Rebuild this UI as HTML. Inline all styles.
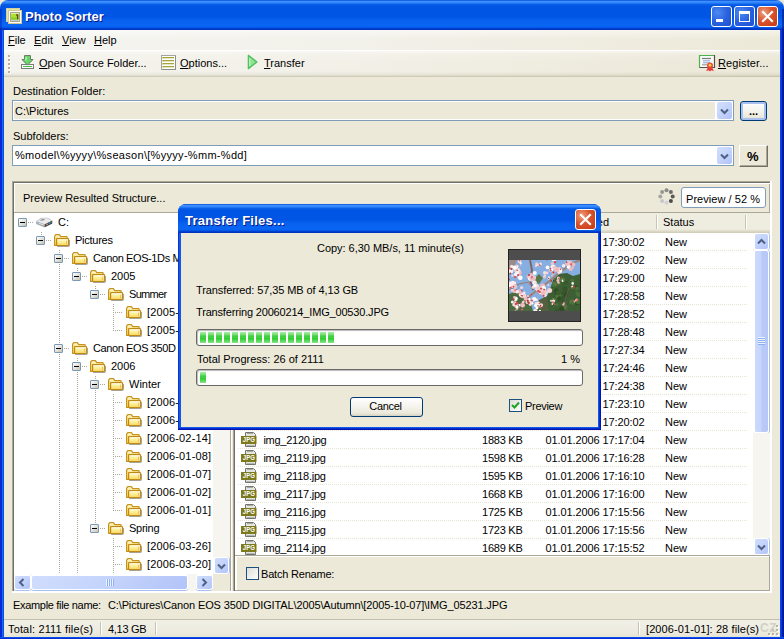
<!DOCTYPE html><html><head><meta charset="utf-8"><title>Photo Sorter</title><style>
*{box-sizing:border-box}
html,body{margin:0;padding:0}
body{width:784px;height:639px;position:relative;overflow:hidden;background:#ece9d8;font:11px "Liberation Sans",sans-serif;color:#000}
.a{position:absolute}
.t{position:absolute;white-space:nowrap;line-height:14px;height:14px}
u{text-decoration:underline}
.titlebar{left:0;top:0;width:784px;height:30px;border-radius:8px 8px 0 0;
 background:linear-gradient(180deg,#0848d8 0,#3c93ff 1.5px,#2a80f8 3px,#0a5fe8 4.5px,#0055e5 6px,#0055e5 17px,#0860ee 20px,#0a66f4 26px,#0658e8 27.5px,#0040d0 28.5px,#002fb8 30px)}
.bl{left:0;top:30px;width:4px;height:609px;background:linear-gradient(90deg,#0a2ad8 0,#0a2ad8 2px,#166aee 2px,#166aee 3px,#0652e2 3px)}
.br{left:780px;top:30px;width:4px;height:609px;background:linear-gradient(90deg,#0c48e8 0,#0c48e8 1px,#0838dc 1px,#0838dc 2px,#001ea8 2px,#001ea8 3px,#00189a 3px)}
.bb{left:0;top:637px;width:784px;height:2px;background:linear-gradient(180deg,#0a4ce8 0,#0a4ce8 1px,#0030d8 1px)}
.wtitle{font:bold 13px "Liberation Sans",sans-serif;color:#fff;text-shadow:1px 1px 0 #0a1883;line-height:16px;height:16px}
.cb{width:21px;height:21px;border:1px solid #fff;border-radius:3px;background:radial-gradient(circle at 30% 30%,#4d8bf0 0,#2a62e0 50%,#1f4fd0 100%)}
.cbx{background:radial-gradient(circle at 30% 30%,#f0a080 0,#d9532c 45%,#c23a14 100%)}
.menubar{left:4px;top:30px;width:776px;height:20px;background:linear-gradient(180deg,rgba(255,255,255,.5) 0,rgba(255,255,255,0) 9px),linear-gradient(90deg,#f5f5f1 0,#f2f1ea 45%,#efecdf 80%,#ece9d8 100%)}
.toolbar{left:4px;top:50px;width:776px;height:27px;background:linear-gradient(180deg,rgba(255,255,255,.55) 0,rgba(255,255,255,.15) 3px,rgba(255,255,255,0) 10px,rgba(100,90,40,0) 20px,rgba(100,90,40,.05) 23px,rgba(100,90,40,.13) 24.5px,rgba(100,90,40,.24) 25.5px,rgba(100,90,40,.06) 26px),linear-gradient(90deg,#f4f3ed 0,#f2f0e7 45%,#eeebdd 80%,#ebe8d8 100%);border-top:1px solid #fff}
.combo{border:1px solid #7f9db9;background:#fff;height:21px}
.cbtn{width:15px;height:17px;border-radius:2px;background:linear-gradient(135deg,#d2dffd 0,#c2d2fb 55%,#b0c1f8 100%)}
.btn{border:1px solid #003c74;border-radius:3px;background:linear-gradient(180deg,#fff 0,#f4f3ec 50%,#ebe8da 85%,#d6d0c0 100%);text-align:center}
.sunk{border:1px solid;border-color:#808080 #fff #fff #808080}
.hdr{background:#ece9d8}
.pb{border:1px solid #686868;border-radius:3px;background:#fff;box-shadow:inset 1px 1px 1px #bbb}
.blk{position:absolute;top:3px;width:6px;height:11px;background:linear-gradient(180deg,#a4eca4 0,#86e486 2px,#44d244 4px,#36cd36 7px,#5cd85c 9px,#8ee68e 11px)}
.row{position:absolute;left:0;height:18px;width:100%}
.ex{position:absolute;width:9px;height:9px;border:1px solid #7898b5;border-radius:1px;background:linear-gradient(135deg,#fff,#c8c4b4)}
.ex:after{content:"";position:absolute;left:1px;top:3px;width:5px;height:1px;background:#000}
.sbtn{width:17px;height:17px;border:1px solid #fff;border-radius:3px;background:linear-gradient(135deg,#d0ddfd 0,#c2d2fb 55%,#b2c3f8 100%)}
.sh{height:16px;border-top-width:2px;box-shadow:0 1px 0 #a9bff1}
.sv{width:16px;border-left-width:2px;box-shadow:1px 0 0 #a9bff1}
.lst{font:11px "Liberation Sans",sans-serif}
</style></head><body><svg width="0" height="0" style="position:absolute"><defs><linearGradient id="fg" x1="0" y1="0" x2="0" y2="1"><stop offset="0" stop-color="#fff8c4"/><stop offset="0.55" stop-color="#fdec8c"/><stop offset="1" stop-color="#f7d460"/></linearGradient><linearGradient id="fb" x1="0" y1="0" x2="0" y2="1"><stop offset="0" stop-color="#fffbe6"/><stop offset="0.35" stop-color="#fbe88c"/><stop offset="1" stop-color="#f6d869"/></linearGradient></defs></svg>
<div class="a" style="left:0;top:0;width:784px;height:12px;background:#ece9d8"></div>
<div class="a titlebar"></div>
<div class="a bl"></div><div class="a br"></div><div class="a bb"></div>
<div class="a" style="left:782px;top:9px;width:2px;height:21px;background:rgba(0,10,110,.5)"></div><div class="a" style="left:0;top:9px;width:2px;height:21px;background:rgba(0,20,160,.35)"></div>
<svg class="a" style="left:6px;top:8px" width="16" height="16" viewBox="0 0 16 16"><rect x="0.5" y="0.5" width="13" height="13" fill="#fffef8" stroke="#dccba0"/><rect x="1.6" y="1.6" width="11.4" height="11.4" fill="#8ed818"/><rect x="2.5" y="2.5" width="13" height="13" fill="#fffffb" stroke="#d6c49a"/><rect x="4.5" y="4.5" width="9" height="9" fill="#f4f4f0" stroke="#aaa492"/><rect x="5" y="5.6" width="8" height="6" fill="#aee230"/><rect x="5" y="9.6" width="8" height="2" fill="#84c82c"/><path d="M10.4 6 Q12.6 5.6 12.4 7.8 L12 11.2 H11 L11 8.6 Q9.8 7.8 10.4 6 Z" fill="#5c4a1c"/><rect x="5.5" y="12.2" width="7" height="0.9" fill="#b4b6c0"/></svg>
<div class="t wtitle" style="left:25px;top:9px">Photo Sorter</div>
<div class="a cb" style="left:711px;top:6px"></div><div class="a" style="left:716px;top:19px;width:7px;height:3px;background:#fff"></div>
<div class="a cb" style="left:734px;top:6px"></div><div class="a" style="left:739px;top:11px;width:11px;height:11px;border:1px solid #fff;border-top-width:3px"></div>
<div class="a cb cbx" style="left:757px;top:6px"></div><svg class="a" style="left:761px;top:10px" width="13" height="13" viewBox="0 0 13 13"><path d="M2 2 L11 11 M11 2 L2 11" stroke="#fff" stroke-width="2.2" stroke-linecap="square"/></svg>
<div class="a menubar"></div>
<div class="t" style="left:8px;top:33px"><u>F</u>ile</div>
<div class="t" style="left:34px;top:33px"><u>E</u>dit</div>
<div class="t" style="left:62px;top:33px"><u>V</u>iew</div>
<div class="t" style="left:94px;top:33px"><u>H</u>elp</div>
<div class="a toolbar"></div>
<div class="a" style="left:9px;top:56px;width:2px;height:2px;background:#fff"></div><div class="a" style="left:8px;top:55px;width:2px;height:2px;background:#b4b09c"></div>
<div class="a" style="left:9px;top:60px;width:2px;height:2px;background:#fff"></div><div class="a" style="left:8px;top:59px;width:2px;height:2px;background:#b4b09c"></div>
<div class="a" style="left:9px;top:64px;width:2px;height:2px;background:#fff"></div><div class="a" style="left:8px;top:63px;width:2px;height:2px;background:#b4b09c"></div>
<div class="a" style="left:9px;top:68px;width:2px;height:2px;background:#fff"></div><div class="a" style="left:8px;top:67px;width:2px;height:2px;background:#b4b09c"></div>
<div class="a" style="left:9px;top:72px;width:2px;height:2px;background:#fff"></div><div class="a" style="left:8px;top:71px;width:2px;height:2px;background:#b4b09c"></div>
<svg class="a" style="left:21px;top:55px" width="13" height="14" viewBox="0 0 13 14"><rect x="0.5" y="9.5" width="12" height="4" fill="#fcfcf8" stroke="#7c7c7c"/><path d="M3.5 0.5 H9.5 V4.5 H12 L6.5 10.2 L1 4.5 H3.5 Z" fill="#66d766" stroke="#6c7c6c" stroke-width="1" stroke-linejoin="round"/><path d="M5 2 V5.5" stroke="#b4f0b4" stroke-width="1.5"/><path d="M2 11.5 H11" stroke="#48c048" stroke-width="1"/></svg>
<div class="t" style="left:39px;top:56px"><u>O</u>pen Source Folder...</div>
<svg class="a" style="left:161px;top:55px" width="15" height="15" viewBox="0 0 15 15"><rect x="0.5" y="0.5" width="14" height="14" fill="#fdfdfa" stroke="#a4a4a0"/><path d="M14.5 1 V14.5 H1" stroke="#8c8c88" fill="none"/><path d="M2 3.5 V2.6 H13 M2 6.5 V5.6 H13 M2 9.5 V8.6 H13 M2 12.5 V11.6 H13" stroke="#a4a43c" stroke-width="1.2" fill="none"/></svg>
<div class="t" style="left:180px;top:56px"><u>O</u>ptions...</div>
<svg class="a" style="left:247px;top:54px" width="11" height="16" viewBox="0 0 11 16"><path d="M1.4 1.4 L9.9 8 L1.4 14.6 Z" fill="#8fe28f" stroke="#4fc262" stroke-width="1.4" stroke-linejoin="round"/><path d="M2.8 4 V12" stroke="#c4f2c4" stroke-width="1.2"/></svg>
<div class="t" style="left:264px;top:56px"><u>T</u>ransfer</div>
<svg class="a" style="left:698px;top:54px" width="18" height="18" viewBox="0 0 18 18"><rect x="1.5" y="1.5" width="15" height="12" fill="#f8faf8"/><path d="M1.5 13.5 V1.5 H16" stroke="#4fb24f" stroke-width="1.2" fill="none"/><path d="M16.5 1 V13.5 H1.5" stroke="#505050" stroke-width="1.2" fill="none"/><path d="M4 4.5 H13" stroke="#7c7c7c" stroke-width="1.2"/><path d="M5 6.8 H12 M5 8.8 H12" stroke="#8aa4d8" stroke-width="1"/><path d="M4 10.8 H9" stroke="#8c8c8c" stroke-width="1"/><path d="M10 13 L8.2 17.2 L10.6 16.2 L12 17.6 L13.4 16.2 L15.8 17.2 L14 13 Z" fill="#e83838"/><circle cx="12" cy="11.4" r="3" fill="#ec4a30"/><circle cx="12" cy="11.2" r="1.4" fill="#f8d048"/></svg>
<div class="t" style="left:718px;top:56px;letter-spacing:0.1px"><u>R</u>egister...</div>
<div class="t" style="left:13px;top:84px">Destination Folder:</div>
<div class="a combo" style="left:12px;top:100px;width:722px"></div><div class="a" style="left:14px;top:102px;width:701px;height:17px;background:#ece9d8"></div>
<div class="t" style="left:15px;top:104px">C:\Pictures</div>
<div class="a cbtn" style="left:717px;top:102px"></div><svg class="a" style="left:720px;top:108px" width="9" height="7" viewBox="0 0 9 7"><path d="M1 1.5 L4.5 5 L8 1.5" fill="none" stroke="#4d6185" stroke-width="2"/></svg>
<div class="a btn" style="left:740px;top:101px;width:27px;height:20px;box-shadow:inset 0 0 0 2px #a8c0f0"></div><div class="t" style="left:749px;top:104px;font-weight:bold">...</div>
<div class="t" style="left:13px;top:129px">Subfolders:</div>
<div class="a combo" style="left:12px;top:145px;width:722px"></div>
<div class="t" style="left:15px;top:148px;letter-spacing:0.3px">%model\%yyyy\%season\[%yyyy-%mm-%dd]</div>
<div class="a cbtn" style="left:717px;top:147px"></div><svg class="a" style="left:720px;top:153px" width="9" height="7" viewBox="0 0 9 7"><path d="M1 1.5 L4.5 5 L8 1.5" fill="none" stroke="#4d6185" stroke-width="2"/></svg>
<div class="a" style="left:739px;top:145px;width:29px;height:22px;border:1px solid;border-color:#fff #716f64 #716f64 #fff;background:#ece9d8;box-shadow:inset -1px -1px 0 #aca899"></div><div class="t" style="left:747px;top:150px;font-weight:bold;font-size:13px">%</div>
<div class="a" style="left:12px;top:181px;width:760px;height:1px;background:#aca899"></div><div class="a" style="left:12px;top:181px;width:1px;height:412px;background:#aca899"></div><div class="a" style="left:13px;top:182px;width:758px;height:1px;background:#716f64"></div><div class="a" style="left:13px;top:182px;width:1px;height:410px;background:#716f64"></div>
<div class="a" style="left:770px;top:181px;width:2px;height:412px;background:#fff"></div><div class="a" style="left:12px;top:591px;width:760px;height:2px;background:#fff"></div>
<div class="a" style="left:14px;top:183px;width:756px;height:1px;background:#fff"></div><div class="a" style="left:14px;top:183px;width:1px;height:29px;background:#fff"></div><div class="a" style="left:769px;top:184px;width:1px;height:29px;background:#aca899"></div><div class="a" style="left:14px;top:212px;width:756px;height:1px;background:#aca899"></div>
<div class="t" style="left:23px;top:191px">Preview Resulted Structure...</div>
<svg class="a" style="left:658px;top:188px" width="17" height="17" viewBox="0 0 17 17"><circle cx="8.5" cy="2.3" r="2" fill="#8a8a86"/><circle cx="12.9" cy="4.1" r="2" fill="#6a6a6a"/><circle cx="14.7" cy="8.5" r="2" fill="#5a5a5a"/><circle cx="12.9" cy="12.9" r="2" fill="#4a4a4a"/><circle cx="8.5" cy="14.7" r="2" fill="#cfcfd6"/><circle cx="4.1" cy="12.9" r="2" fill="#c6c6cf"/><circle cx="2.3" cy="8.5" r="2" fill="#a6a6a0"/><circle cx="4.1" cy="4.1" r="2" fill="#98988f"/></svg>
<div class="a btn" style="left:681px;top:187px;width:85px;height:21px;background:#fff;border-color:#7f9db9"></div><div class="t" style="left:686px;top:192px;letter-spacing:0.05px">Preview / 52 %</div>
<div class="a" style="left:14px;top:213px;width:216px;height:361px;background:#fff;overflow:hidden">
<div class="a" style="left:27px;top:19px;width:1px;height:4px;background:repeating-linear-gradient(180deg,#aca898 0,#aca898 1px,transparent 1px,transparent 2px)"></div>
<div class="a" style="left:45px;top:37px;width:1px;height:4px;background:repeating-linear-gradient(180deg,#aca898 0,#aca898 1px,transparent 1px,transparent 2px)"></div>
<div class="a" style="left:45px;top:51px;width:1px;height:80px;background:repeating-linear-gradient(180deg,#aca898 0,#aca898 1px,transparent 1px,transparent 2px)"></div>
<div class="a" style="left:45px;top:141px;width:1px;height:246px;background:repeating-linear-gradient(180deg,#aca898 0,#aca898 1px,transparent 1px,transparent 2px)"></div>
<div class="a" style="left:63px;top:55px;width:1px;height:4px;background:repeating-linear-gradient(180deg,#aca898 0,#aca898 1px,transparent 1px,transparent 2px)"></div>
<div class="a" style="left:81px;top:73px;width:1px;height:4px;background:repeating-linear-gradient(180deg,#aca898 0,#aca898 1px,transparent 1px,transparent 2px)"></div>
<div class="a" style="left:99px;top:91px;width:1px;height:27px;background:repeating-linear-gradient(180deg,#aca898 0,#aca898 1px,transparent 1px,transparent 2px)"></div>
<div class="a" style="left:63px;top:145px;width:1px;height:4px;background:repeating-linear-gradient(180deg,#aca898 0,#aca898 1px,transparent 1px,transparent 2px)"></div>
<div class="a" style="left:63px;top:159px;width:1px;height:228px;background:repeating-linear-gradient(180deg,#aca898 0,#aca898 1px,transparent 1px,transparent 2px)"></div>
<div class="a" style="left:81px;top:163px;width:1px;height:4px;background:repeating-linear-gradient(180deg,#aca898 0,#aca898 1px,transparent 1px,transparent 2px)"></div>
<div class="a" style="left:81px;top:177px;width:1px;height:134px;background:repeating-linear-gradient(180deg,#aca898 0,#aca898 1px,transparent 1px,transparent 2px)"></div>
<div class="a" style="left:99px;top:181px;width:1px;height:117px;background:repeating-linear-gradient(180deg,#aca898 0,#aca898 1px,transparent 1px,transparent 2px)"></div>
<div class="a" style="left:99px;top:325px;width:1px;height:62px;background:repeating-linear-gradient(180deg,#aca898 0,#aca898 1px,transparent 1px,transparent 2px)"></div>
<div class="a" style="left:14px;top:9px;width:5px;height:1px;background:repeating-linear-gradient(90deg,#aca898 0,#aca898 1px,transparent 1px,transparent 2px)"></div>
<div class="ex" style="left:4px;top:5px"></div>
<svg class="a" style="left:22px;top:1px" width="17" height="16" viewBox="0 0 17 16"><path d="M0.4 7.4 L5 4.2 L11.6 4 L16.2 6.8 L16.2 9.6 L8.6 13.2 L0.4 10 Z" fill="#9c9c9c"/><path d="M0.4 7.4 L5 4.2 L11.6 4 L16.2 6.8 L8.6 10.4 Z" fill="#ececec" stroke="#b4b4b4" stroke-width="0.5"/><path d="M3.4 6.6 L6 5 L9.4 5 L7 6.8 Z" fill="#9a9a9a"/><path d="M8.6 10.4 L16.2 6.8 L16.2 9.6 L8.6 13.2 Z" fill="#3c444c"/><path d="M0.4 7.4 L8.6 10.4 L8.6 13.2 L0.4 10 Z" fill="#b0b0b0"/><path d="M1.4 8.6 L7.6 10.9" stroke="#e8e8e8" stroke-width="0.9"/><circle cx="13.4" cy="9.2" r="0.9" fill="#4a7ac0"/><circle cx="11" cy="10.4" r="0.8" fill="#e0a070"/><circle cx="14.8" cy="8" r="0.8" fill="#58a040"/><circle cx="2" cy="9" r="0.8" fill="#6aa0e0"/></svg>
<div class="t" style="left:44px;top:2px">C:</div>
<div class="a" style="left:32px;top:27px;width:5px;height:1px;background:repeating-linear-gradient(90deg,#aca898 0,#aca898 1px,transparent 1px,transparent 2px)"></div>
<div class="ex" style="left:22px;top:23px"></div>
<svg class="a" style="left:40px;top:19px" width="17" height="16" viewBox="0 0 17 16"><path d="M0.6 13.4 V4.2 L1.8 2.6 H5.4 L6.8 4.6 H12.4 Q13.2 4.6 13.2 5.4 V7 H2.6 V13.4 Z" fill="url(#fb)" stroke="#c6931c" stroke-width="1.2" stroke-linejoin="round"/><rect x="2.6" y="6.6" width="12" height="7" rx="0.8" fill="url(#fg)" stroke="#bf8a16" stroke-width="1.2"/><path d="M3.6 7.9 H13.6" stroke="#fffdf0" stroke-width="1"/><path d="M12.6 8.6 V12.4" stroke="#f0b860" stroke-width="0.9"/><path d="M3.2 14.5 H15.2 M15.5 8 V14.2" stroke="#50505c" stroke-opacity="0.5" stroke-width="0.9" fill="none"/></svg>
<div class="t" style="left:61px;top:20px;letter-spacing:-0.25px">Pictures</div>
<div class="a" style="left:50px;top:45px;width:5px;height:1px;background:repeating-linear-gradient(90deg,#aca898 0,#aca898 1px,transparent 1px,transparent 2px)"></div>
<div class="ex" style="left:40px;top:41px"></div>
<svg class="a" style="left:58px;top:37px" width="17" height="16" viewBox="0 0 17 16"><path d="M0.6 13.4 V4.2 L1.8 2.6 H5.4 L6.8 4.6 H12.4 Q13.2 4.6 13.2 5.4 V7 H2.6 V13.4 Z" fill="url(#fb)" stroke="#c6931c" stroke-width="1.2" stroke-linejoin="round"/><rect x="2.6" y="6.6" width="12" height="7" rx="0.8" fill="url(#fg)" stroke="#bf8a16" stroke-width="1.2"/><path d="M3.6 7.9 H13.6" stroke="#fffdf0" stroke-width="1"/><path d="M12.6 8.6 V12.4" stroke="#f0b860" stroke-width="0.9"/><path d="M3.2 14.5 H15.2 M15.5 8 V14.2" stroke="#50505c" stroke-opacity="0.5" stroke-width="0.9" fill="none"/></svg>
<div class="t" style="left:79px;top:38px;letter-spacing:-0.4px">Canon EOS-1Ds Mark II</div>
<div class="a" style="left:68px;top:63px;width:5px;height:1px;background:repeating-linear-gradient(90deg,#aca898 0,#aca898 1px,transparent 1px,transparent 2px)"></div>
<div class="ex" style="left:58px;top:59px"></div>
<svg class="a" style="left:76px;top:55px" width="17" height="16" viewBox="0 0 17 16"><path d="M0.6 13.4 V4.2 L1.8 2.6 H5.4 L6.8 4.6 H12.4 Q13.2 4.6 13.2 5.4 V7 H2.6 V13.4 Z" fill="url(#fb)" stroke="#c6931c" stroke-width="1.2" stroke-linejoin="round"/><rect x="2.6" y="6.6" width="12" height="7" rx="0.8" fill="url(#fg)" stroke="#bf8a16" stroke-width="1.2"/><path d="M3.6 7.9 H13.6" stroke="#fffdf0" stroke-width="1"/><path d="M12.6 8.6 V12.4" stroke="#f0b860" stroke-width="0.9"/><path d="M3.2 14.5 H15.2 M15.5 8 V14.2" stroke="#50505c" stroke-opacity="0.5" stroke-width="0.9" fill="none"/></svg>
<div class="t" style="left:97px;top:56px">2005</div>
<div class="a" style="left:86px;top:81px;width:5px;height:1px;background:repeating-linear-gradient(90deg,#aca898 0,#aca898 1px,transparent 1px,transparent 2px)"></div>
<div class="ex" style="left:76px;top:77px"></div>
<svg class="a" style="left:94px;top:73px" width="17" height="16" viewBox="0 0 17 16"><path d="M0.6 13.4 V4.2 L1.8 2.6 H5.4 L6.8 4.6 H12.4 Q13.2 4.6 13.2 5.4 V7 H2.6 V13.4 Z" fill="url(#fb)" stroke="#c6931c" stroke-width="1.2" stroke-linejoin="round"/><rect x="2.6" y="6.6" width="12" height="7" rx="0.8" fill="url(#fg)" stroke="#bf8a16" stroke-width="1.2"/><path d="M3.6 7.9 H13.6" stroke="#fffdf0" stroke-width="1"/><path d="M12.6 8.6 V12.4" stroke="#f0b860" stroke-width="0.9"/><path d="M3.2 14.5 H15.2 M15.5 8 V14.2" stroke="#50505c" stroke-opacity="0.5" stroke-width="0.9" fill="none"/></svg>
<div class="t" style="left:115px;top:74px;letter-spacing:-0.7px">Summer</div>
<div class="a" style="left:101px;top:99px;width:8px;height:1px;background:repeating-linear-gradient(90deg,#aca898 0,#aca898 1px,transparent 1px,transparent 2px)"></div>
<svg class="a" style="left:112px;top:91px" width="17" height="16" viewBox="0 0 17 16"><path d="M0.6 13.4 V4.2 L1.8 2.6 H5.4 L6.8 4.6 H12.4 Q13.2 4.6 13.2 5.4 V7 H2.6 V13.4 Z" fill="url(#fb)" stroke="#c6931c" stroke-width="1.2" stroke-linejoin="round"/><rect x="2.6" y="6.6" width="12" height="7" rx="0.8" fill="url(#fg)" stroke="#bf8a16" stroke-width="1.2"/><path d="M3.6 7.9 H13.6" stroke="#fffdf0" stroke-width="1"/><path d="M12.6 8.6 V12.4" stroke="#f0b860" stroke-width="0.9"/><path d="M3.2 14.5 H15.2 M15.5 8 V14.2" stroke="#50505c" stroke-opacity="0.5" stroke-width="0.9" fill="none"/></svg>
<div class="t" style="left:133px;top:92px;letter-spacing:0.15px">[2005-</div>
<div class="a" style="left:101px;top:117px;width:8px;height:1px;background:repeating-linear-gradient(90deg,#aca898 0,#aca898 1px,transparent 1px,transparent 2px)"></div>
<svg class="a" style="left:112px;top:109px" width="17" height="16" viewBox="0 0 17 16"><path d="M0.6 13.4 V4.2 L1.8 2.6 H5.4 L6.8 4.6 H12.4 Q13.2 4.6 13.2 5.4 V7 H2.6 V13.4 Z" fill="url(#fb)" stroke="#c6931c" stroke-width="1.2" stroke-linejoin="round"/><rect x="2.6" y="6.6" width="12" height="7" rx="0.8" fill="url(#fg)" stroke="#bf8a16" stroke-width="1.2"/><path d="M3.6 7.9 H13.6" stroke="#fffdf0" stroke-width="1"/><path d="M12.6 8.6 V12.4" stroke="#f0b860" stroke-width="0.9"/><path d="M3.2 14.5 H15.2 M15.5 8 V14.2" stroke="#50505c" stroke-opacity="0.5" stroke-width="0.9" fill="none"/></svg>
<div class="t" style="left:133px;top:110px;letter-spacing:0.15px">[2005-</div>
<div class="a" style="left:50px;top:135px;width:5px;height:1px;background:repeating-linear-gradient(90deg,#aca898 0,#aca898 1px,transparent 1px,transparent 2px)"></div>
<div class="ex" style="left:40px;top:131px"></div>
<svg class="a" style="left:58px;top:127px" width="17" height="16" viewBox="0 0 17 16"><path d="M0.6 13.4 V4.2 L1.8 2.6 H5.4 L6.8 4.6 H12.4 Q13.2 4.6 13.2 5.4 V7 H2.6 V13.4 Z" fill="url(#fb)" stroke="#c6931c" stroke-width="1.2" stroke-linejoin="round"/><rect x="2.6" y="6.6" width="12" height="7" rx="0.8" fill="url(#fg)" stroke="#bf8a16" stroke-width="1.2"/><path d="M3.6 7.9 H13.6" stroke="#fffdf0" stroke-width="1"/><path d="M12.6 8.6 V12.4" stroke="#f0b860" stroke-width="0.9"/><path d="M3.2 14.5 H15.2 M15.5 8 V14.2" stroke="#50505c" stroke-opacity="0.5" stroke-width="0.9" fill="none"/></svg>
<div class="t" style="left:79px;top:128px;letter-spacing:-0.4px">Canon EOS 350D DIGITAL</div>
<div class="a" style="left:68px;top:153px;width:5px;height:1px;background:repeating-linear-gradient(90deg,#aca898 0,#aca898 1px,transparent 1px,transparent 2px)"></div>
<div class="ex" style="left:58px;top:149px"></div>
<svg class="a" style="left:76px;top:145px" width="17" height="16" viewBox="0 0 17 16"><path d="M0.6 13.4 V4.2 L1.8 2.6 H5.4 L6.8 4.6 H12.4 Q13.2 4.6 13.2 5.4 V7 H2.6 V13.4 Z" fill="url(#fb)" stroke="#c6931c" stroke-width="1.2" stroke-linejoin="round"/><rect x="2.6" y="6.6" width="12" height="7" rx="0.8" fill="url(#fg)" stroke="#bf8a16" stroke-width="1.2"/><path d="M3.6 7.9 H13.6" stroke="#fffdf0" stroke-width="1"/><path d="M12.6 8.6 V12.4" stroke="#f0b860" stroke-width="0.9"/><path d="M3.2 14.5 H15.2 M15.5 8 V14.2" stroke="#50505c" stroke-opacity="0.5" stroke-width="0.9" fill="none"/></svg>
<div class="t" style="left:97px;top:146px">2006</div>
<div class="a" style="left:86px;top:171px;width:5px;height:1px;background:repeating-linear-gradient(90deg,#aca898 0,#aca898 1px,transparent 1px,transparent 2px)"></div>
<div class="ex" style="left:76px;top:167px"></div>
<svg class="a" style="left:94px;top:163px" width="17" height="16" viewBox="0 0 17 16"><path d="M0.6 13.4 V4.2 L1.8 2.6 H5.4 L6.8 4.6 H12.4 Q13.2 4.6 13.2 5.4 V7 H2.6 V13.4 Z" fill="url(#fb)" stroke="#c6931c" stroke-width="1.2" stroke-linejoin="round"/><rect x="2.6" y="6.6" width="12" height="7" rx="0.8" fill="url(#fg)" stroke="#bf8a16" stroke-width="1.2"/><path d="M3.6 7.9 H13.6" stroke="#fffdf0" stroke-width="1"/><path d="M12.6 8.6 V12.4" stroke="#f0b860" stroke-width="0.9"/><path d="M3.2 14.5 H15.2 M15.5 8 V14.2" stroke="#50505c" stroke-opacity="0.5" stroke-width="0.9" fill="none"/></svg>
<div class="t" style="left:115px;top:164px">Winter</div>
<div class="a" style="left:101px;top:189px;width:8px;height:1px;background:repeating-linear-gradient(90deg,#aca898 0,#aca898 1px,transparent 1px,transparent 2px)"></div>
<svg class="a" style="left:112px;top:181px" width="17" height="16" viewBox="0 0 17 16"><path d="M0.6 13.4 V4.2 L1.8 2.6 H5.4 L6.8 4.6 H12.4 Q13.2 4.6 13.2 5.4 V7 H2.6 V13.4 Z" fill="url(#fb)" stroke="#c6931c" stroke-width="1.2" stroke-linejoin="round"/><rect x="2.6" y="6.6" width="12" height="7" rx="0.8" fill="url(#fg)" stroke="#bf8a16" stroke-width="1.2"/><path d="M3.6 7.9 H13.6" stroke="#fffdf0" stroke-width="1"/><path d="M12.6 8.6 V12.4" stroke="#f0b860" stroke-width="0.9"/><path d="M3.2 14.5 H15.2 M15.5 8 V14.2" stroke="#50505c" stroke-opacity="0.5" stroke-width="0.9" fill="none"/></svg>
<div class="t" style="left:133px;top:182px;letter-spacing:0.15px">[2006-</div>
<div class="a" style="left:101px;top:207px;width:8px;height:1px;background:repeating-linear-gradient(90deg,#aca898 0,#aca898 1px,transparent 1px,transparent 2px)"></div>
<svg class="a" style="left:112px;top:199px" width="17" height="16" viewBox="0 0 17 16"><path d="M0.6 13.4 V4.2 L1.8 2.6 H5.4 L6.8 4.6 H12.4 Q13.2 4.6 13.2 5.4 V7 H2.6 V13.4 Z" fill="url(#fb)" stroke="#c6931c" stroke-width="1.2" stroke-linejoin="round"/><rect x="2.6" y="6.6" width="12" height="7" rx="0.8" fill="url(#fg)" stroke="#bf8a16" stroke-width="1.2"/><path d="M3.6 7.9 H13.6" stroke="#fffdf0" stroke-width="1"/><path d="M12.6 8.6 V12.4" stroke="#f0b860" stroke-width="0.9"/><path d="M3.2 14.5 H15.2 M15.5 8 V14.2" stroke="#50505c" stroke-opacity="0.5" stroke-width="0.9" fill="none"/></svg>
<div class="t" style="left:133px;top:200px;letter-spacing:0.15px">[2006-</div>
<div class="a" style="left:101px;top:225px;width:8px;height:1px;background:repeating-linear-gradient(90deg,#aca898 0,#aca898 1px,transparent 1px,transparent 2px)"></div>
<svg class="a" style="left:112px;top:217px" width="17" height="16" viewBox="0 0 17 16"><path d="M0.6 13.4 V4.2 L1.8 2.6 H5.4 L6.8 4.6 H12.4 Q13.2 4.6 13.2 5.4 V7 H2.6 V13.4 Z" fill="url(#fb)" stroke="#c6931c" stroke-width="1.2" stroke-linejoin="round"/><rect x="2.6" y="6.6" width="12" height="7" rx="0.8" fill="url(#fg)" stroke="#bf8a16" stroke-width="1.2"/><path d="M3.6 7.9 H13.6" stroke="#fffdf0" stroke-width="1"/><path d="M12.6 8.6 V12.4" stroke="#f0b860" stroke-width="0.9"/><path d="M3.2 14.5 H15.2 M15.5 8 V14.2" stroke="#50505c" stroke-opacity="0.5" stroke-width="0.9" fill="none"/></svg>
<div class="t" style="left:133px;top:218px;letter-spacing:0.15px">[2006-02-14]</div>
<div class="a" style="left:101px;top:243px;width:8px;height:1px;background:repeating-linear-gradient(90deg,#aca898 0,#aca898 1px,transparent 1px,transparent 2px)"></div>
<svg class="a" style="left:112px;top:235px" width="17" height="16" viewBox="0 0 17 16"><path d="M0.6 13.4 V4.2 L1.8 2.6 H5.4 L6.8 4.6 H12.4 Q13.2 4.6 13.2 5.4 V7 H2.6 V13.4 Z" fill="url(#fb)" stroke="#c6931c" stroke-width="1.2" stroke-linejoin="round"/><rect x="2.6" y="6.6" width="12" height="7" rx="0.8" fill="url(#fg)" stroke="#bf8a16" stroke-width="1.2"/><path d="M3.6 7.9 H13.6" stroke="#fffdf0" stroke-width="1"/><path d="M12.6 8.6 V12.4" stroke="#f0b860" stroke-width="0.9"/><path d="M3.2 14.5 H15.2 M15.5 8 V14.2" stroke="#50505c" stroke-opacity="0.5" stroke-width="0.9" fill="none"/></svg>
<div class="t" style="left:133px;top:236px;letter-spacing:0.15px">[2006-01-08]</div>
<div class="a" style="left:101px;top:261px;width:8px;height:1px;background:repeating-linear-gradient(90deg,#aca898 0,#aca898 1px,transparent 1px,transparent 2px)"></div>
<svg class="a" style="left:112px;top:253px" width="17" height="16" viewBox="0 0 17 16"><path d="M0.6 13.4 V4.2 L1.8 2.6 H5.4 L6.8 4.6 H12.4 Q13.2 4.6 13.2 5.4 V7 H2.6 V13.4 Z" fill="url(#fb)" stroke="#c6931c" stroke-width="1.2" stroke-linejoin="round"/><rect x="2.6" y="6.6" width="12" height="7" rx="0.8" fill="url(#fg)" stroke="#bf8a16" stroke-width="1.2"/><path d="M3.6 7.9 H13.6" stroke="#fffdf0" stroke-width="1"/><path d="M12.6 8.6 V12.4" stroke="#f0b860" stroke-width="0.9"/><path d="M3.2 14.5 H15.2 M15.5 8 V14.2" stroke="#50505c" stroke-opacity="0.5" stroke-width="0.9" fill="none"/></svg>
<div class="t" style="left:133px;top:254px;letter-spacing:0.15px">[2006-01-07]</div>
<div class="a" style="left:101px;top:279px;width:8px;height:1px;background:repeating-linear-gradient(90deg,#aca898 0,#aca898 1px,transparent 1px,transparent 2px)"></div>
<svg class="a" style="left:112px;top:271px" width="17" height="16" viewBox="0 0 17 16"><path d="M0.6 13.4 V4.2 L1.8 2.6 H5.4 L6.8 4.6 H12.4 Q13.2 4.6 13.2 5.4 V7 H2.6 V13.4 Z" fill="url(#fb)" stroke="#c6931c" stroke-width="1.2" stroke-linejoin="round"/><rect x="2.6" y="6.6" width="12" height="7" rx="0.8" fill="url(#fg)" stroke="#bf8a16" stroke-width="1.2"/><path d="M3.6 7.9 H13.6" stroke="#fffdf0" stroke-width="1"/><path d="M12.6 8.6 V12.4" stroke="#f0b860" stroke-width="0.9"/><path d="M3.2 14.5 H15.2 M15.5 8 V14.2" stroke="#50505c" stroke-opacity="0.5" stroke-width="0.9" fill="none"/></svg>
<div class="t" style="left:133px;top:272px;letter-spacing:0.15px">[2006-01-02]</div>
<div class="a" style="left:101px;top:297px;width:8px;height:1px;background:repeating-linear-gradient(90deg,#aca898 0,#aca898 1px,transparent 1px,transparent 2px)"></div>
<svg class="a" style="left:112px;top:289px" width="17" height="16" viewBox="0 0 17 16"><path d="M0.6 13.4 V4.2 L1.8 2.6 H5.4 L6.8 4.6 H12.4 Q13.2 4.6 13.2 5.4 V7 H2.6 V13.4 Z" fill="url(#fb)" stroke="#c6931c" stroke-width="1.2" stroke-linejoin="round"/><rect x="2.6" y="6.6" width="12" height="7" rx="0.8" fill="url(#fg)" stroke="#bf8a16" stroke-width="1.2"/><path d="M3.6 7.9 H13.6" stroke="#fffdf0" stroke-width="1"/><path d="M12.6 8.6 V12.4" stroke="#f0b860" stroke-width="0.9"/><path d="M3.2 14.5 H15.2 M15.5 8 V14.2" stroke="#50505c" stroke-opacity="0.5" stroke-width="0.9" fill="none"/></svg>
<div class="t" style="left:133px;top:290px;letter-spacing:0.15px">[2006-01-01]</div>
<div class="a" style="left:86px;top:315px;width:5px;height:1px;background:repeating-linear-gradient(90deg,#aca898 0,#aca898 1px,transparent 1px,transparent 2px)"></div>
<div class="ex" style="left:76px;top:311px"></div>
<svg class="a" style="left:94px;top:307px" width="17" height="16" viewBox="0 0 17 16"><path d="M0.6 13.4 V4.2 L1.8 2.6 H5.4 L6.8 4.6 H12.4 Q13.2 4.6 13.2 5.4 V7 H2.6 V13.4 Z" fill="url(#fb)" stroke="#c6931c" stroke-width="1.2" stroke-linejoin="round"/><rect x="2.6" y="6.6" width="12" height="7" rx="0.8" fill="url(#fg)" stroke="#bf8a16" stroke-width="1.2"/><path d="M3.6 7.9 H13.6" stroke="#fffdf0" stroke-width="1"/><path d="M12.6 8.6 V12.4" stroke="#f0b860" stroke-width="0.9"/><path d="M3.2 14.5 H15.2 M15.5 8 V14.2" stroke="#50505c" stroke-opacity="0.5" stroke-width="0.9" fill="none"/></svg>
<div class="t" style="left:115px;top:308px;letter-spacing:-0.25px">Spring</div>
<div class="a" style="left:101px;top:333px;width:8px;height:1px;background:repeating-linear-gradient(90deg,#aca898 0,#aca898 1px,transparent 1px,transparent 2px)"></div>
<svg class="a" style="left:112px;top:325px" width="17" height="16" viewBox="0 0 17 16"><path d="M0.6 13.4 V4.2 L1.8 2.6 H5.4 L6.8 4.6 H12.4 Q13.2 4.6 13.2 5.4 V7 H2.6 V13.4 Z" fill="url(#fb)" stroke="#c6931c" stroke-width="1.2" stroke-linejoin="round"/><rect x="2.6" y="6.6" width="12" height="7" rx="0.8" fill="url(#fg)" stroke="#bf8a16" stroke-width="1.2"/><path d="M3.6 7.9 H13.6" stroke="#fffdf0" stroke-width="1"/><path d="M12.6 8.6 V12.4" stroke="#f0b860" stroke-width="0.9"/><path d="M3.2 14.5 H15.2 M15.5 8 V14.2" stroke="#50505c" stroke-opacity="0.5" stroke-width="0.9" fill="none"/></svg>
<div class="t" style="left:133px;top:326px;letter-spacing:0.15px">[2006-03-26]</div>
<div class="a" style="left:101px;top:351px;width:8px;height:1px;background:repeating-linear-gradient(90deg,#aca898 0,#aca898 1px,transparent 1px,transparent 2px)"></div>
<svg class="a" style="left:112px;top:343px" width="17" height="16" viewBox="0 0 17 16"><path d="M0.6 13.4 V4.2 L1.8 2.6 H5.4 L6.8 4.6 H12.4 Q13.2 4.6 13.2 5.4 V7 H2.6 V13.4 Z" fill="url(#fb)" stroke="#c6931c" stroke-width="1.2" stroke-linejoin="round"/><rect x="2.6" y="6.6" width="12" height="7" rx="0.8" fill="url(#fg)" stroke="#bf8a16" stroke-width="1.2"/><path d="M3.6 7.9 H13.6" stroke="#fffdf0" stroke-width="1"/><path d="M12.6 8.6 V12.4" stroke="#f0b860" stroke-width="0.9"/><path d="M3.2 14.5 H15.2 M15.5 8 V14.2" stroke="#50505c" stroke-opacity="0.5" stroke-width="0.9" fill="none"/></svg>
<div class="t" style="left:133px;top:344px;letter-spacing:0.15px">[2006-03-20]</div>
</div>
<div class="a" style="left:213px;top:213px;width:17px;height:361px;background:#f6f5f0"></div>
<div class="a sbtn sv" style="left:213px;top:557px"></div><svg class="a" style="left:217px;top:563px" width="9" height="7" viewBox="0 0 9 7"><path d="M1 1.5 L4.5 5 L8 1.5" fill="none" stroke="#4d6185" stroke-width="2"/></svg>
<div class="a" style="left:14px;top:574px;width:199px;height:17px;background:#f6f5f0"></div>
<div class="a sbtn sh" style="left:14px;top:574px"></div><svg class="a" style="left:18px;top:578px" width="7" height="9" viewBox="0 0 7 9"><path d="M5.5 1 L2 4.5 L5.5 8" fill="none" stroke="#4d6185" stroke-width="2"/></svg>
<div class="a sbtn sh" style="left:31px;top:574px;width:157px"></div>
<div class="a" style="left:106px;top:579px;width:8px;height:7px;background:repeating-linear-gradient(90deg,#eef4fe 0,#eef4fe 1px,#8cb0f8 1px,#8cb0f8 2px)"></div>
<div class="a sbtn sh" style="left:196px;top:574px"></div><svg class="a" style="left:201px;top:578px" width="7" height="9" viewBox="0 0 7 9"><path d="M1.5 1 L5 4.5 L1.5 8" fill="none" stroke="#4d6185" stroke-width="2"/></svg>
<div class="a" style="left:213px;top:574px;width:17px;height:17px;background:#ece9d8"></div>
<div class="a" style="left:230px;top:213px;width:1px;height:378px;background:#aca899"></div><div class="a" style="left:231px;top:213px;width:1px;height:378px;background:#fff"></div><div class="a" style="left:232px;top:213px;width:1px;height:378px;background:#ece9d8"></div><div class="a" style="left:233px;top:213px;width:1px;height:378px;background:#aca899"></div><div class="a" style="left:234px;top:213px;width:1px;height:378px;background:#716f64"></div>
<div class="a" style="left:235px;top:213px;width:535px;height:20px;background:linear-gradient(180deg,#efede0 0,#efede0 16px,#e8e5d6 17px,#dfdccb 18px,#d5d1bf 19px,#d0ccba 20px)"></div>
<div class="a" style="left:656px;top:215px;width:1px;height:14px;background:#c8c5b2"></div><div class="a" style="left:657px;top:215px;width:1px;height:14px;background:#fff"></div>
<div class="a" style="left:745px;top:215px;width:1px;height:14px;background:#c8c5b2"></div><div class="a" style="left:746px;top:215px;width:1px;height:14px;background:#fff"></div>
<div class="t lst" style="left:509px;width:100px;text-align:right;top:216px">Date Modified</div><div class="t lst" style="left:663px;top:216px">Status</div>
<div class="a" style="left:235px;top:233px;width:535px;height:322px;background:#fff"></div>
<div class="t lst" style="left:545.5px;top:236px;letter-spacing:-0.1px">01.01.2006 17:30:02</div>
<div class="t lst" style="left:665px;top:236px">New</div>
<div class="a" style="left:238px;top:250px;width:510px;height:1px;background:repeating-linear-gradient(90deg,#e8e4d2 0,#e8e4d2 1px,transparent 1px,transparent 2px)"></div>
<div class="t lst" style="left:545.5px;top:254px;letter-spacing:-0.1px">01.01.2006 17:29:02</div>
<div class="t lst" style="left:665px;top:254px">New</div>
<div class="a" style="left:238px;top:268px;width:510px;height:1px;background:repeating-linear-gradient(90deg,#e8e4d2 0,#e8e4d2 1px,transparent 1px,transparent 2px)"></div>
<div class="t lst" style="left:545.5px;top:272px;letter-spacing:-0.1px">01.01.2006 17:29:00</div>
<div class="t lst" style="left:665px;top:272px">New</div>
<div class="a" style="left:238px;top:286px;width:510px;height:1px;background:repeating-linear-gradient(90deg,#e8e4d2 0,#e8e4d2 1px,transparent 1px,transparent 2px)"></div>
<div class="t lst" style="left:545.5px;top:290px;letter-spacing:-0.1px">01.01.2006 17:28:58</div>
<div class="t lst" style="left:665px;top:290px">New</div>
<div class="a" style="left:238px;top:304px;width:510px;height:1px;background:repeating-linear-gradient(90deg,#e8e4d2 0,#e8e4d2 1px,transparent 1px,transparent 2px)"></div>
<div class="t lst" style="left:545.5px;top:308px;letter-spacing:-0.1px">01.01.2006 17:28:52</div>
<div class="t lst" style="left:665px;top:308px">New</div>
<div class="a" style="left:238px;top:322px;width:510px;height:1px;background:repeating-linear-gradient(90deg,#e8e4d2 0,#e8e4d2 1px,transparent 1px,transparent 2px)"></div>
<div class="t lst" style="left:545.5px;top:326px;letter-spacing:-0.1px">01.01.2006 17:28:48</div>
<div class="t lst" style="left:665px;top:326px">New</div>
<div class="a" style="left:238px;top:340px;width:510px;height:1px;background:repeating-linear-gradient(90deg,#e8e4d2 0,#e8e4d2 1px,transparent 1px,transparent 2px)"></div>
<div class="t lst" style="left:545.5px;top:344px;letter-spacing:-0.1px">01.01.2006 17:27:34</div>
<div class="t lst" style="left:665px;top:344px">New</div>
<div class="a" style="left:238px;top:358px;width:510px;height:1px;background:repeating-linear-gradient(90deg,#e8e4d2 0,#e8e4d2 1px,transparent 1px,transparent 2px)"></div>
<div class="t lst" style="left:545.5px;top:362px;letter-spacing:-0.1px">01.01.2006 17:24:46</div>
<div class="t lst" style="left:665px;top:362px">New</div>
<div class="a" style="left:238px;top:376px;width:510px;height:1px;background:repeating-linear-gradient(90deg,#e8e4d2 0,#e8e4d2 1px,transparent 1px,transparent 2px)"></div>
<div class="t lst" style="left:545.5px;top:380px;letter-spacing:-0.1px">01.01.2006 17:24:38</div>
<div class="t lst" style="left:665px;top:380px">New</div>
<div class="a" style="left:238px;top:394px;width:510px;height:1px;background:repeating-linear-gradient(90deg,#e8e4d2 0,#e8e4d2 1px,transparent 1px,transparent 2px)"></div>
<div class="t lst" style="left:545.5px;top:398px;letter-spacing:-0.1px">01.01.2006 17:23:10</div>
<div class="t lst" style="left:665px;top:398px">New</div>
<div class="a" style="left:238px;top:412px;width:510px;height:1px;background:repeating-linear-gradient(90deg,#e8e4d2 0,#e8e4d2 1px,transparent 1px,transparent 2px)"></div>
<div class="t lst" style="left:545.5px;top:416px;letter-spacing:-0.1px">01.01.2006 17:20:02</div>
<div class="t lst" style="left:665px;top:416px">New</div>
<div class="a" style="left:238px;top:430px;width:510px;height:1px;background:repeating-linear-gradient(90deg,#e8e4d2 0,#e8e4d2 1px,transparent 1px,transparent 2px)"></div>
<svg class="a" style="left:240px;top:432px" width="17" height="16" viewBox="0 0 17 16"><path d="M5.5 0.5 H13.5 L15.5 2.5 V14.5 H5.5 Z" fill="#e4e4e0" stroke="#74746f" stroke-width="1"/><path d="M7 1.5 H13" stroke="#a8a8a4"/><path d="M6.5 13.5 H14.5" stroke="#b4b4b0"/><rect x="1" y="4" width="15.5" height="8" fill="#7c7a1c"/><text x="8.8" y="10.4" font-family="Liberation Sans, sans-serif" font-size="6.4" font-weight="bold" fill="#fff" text-anchor="middle" textLength="12" lengthAdjust="spacingAndGlyphs">JPG</text></svg>
<div class="t lst" style="left:263.4px;top:434px;letter-spacing:-0.25px">img_2120.jpg</div>
<div class="t lst" style="left:462.5px;width:60px;text-align:right;top:434px;letter-spacing:-0.25px">1883 KB</div>
<div class="t lst" style="left:545.5px;top:434px;letter-spacing:-0.1px">01.01.2006 17:17:04</div>
<div class="t lst" style="left:665px;top:434px">New</div>
<div class="a" style="left:238px;top:448px;width:510px;height:1px;background:repeating-linear-gradient(90deg,#e8e4d2 0,#e8e4d2 1px,transparent 1px,transparent 2px)"></div>
<svg class="a" style="left:240px;top:450px" width="17" height="16" viewBox="0 0 17 16"><path d="M5.5 0.5 H13.5 L15.5 2.5 V14.5 H5.5 Z" fill="#e4e4e0" stroke="#74746f" stroke-width="1"/><path d="M7 1.5 H13" stroke="#a8a8a4"/><path d="M6.5 13.5 H14.5" stroke="#b4b4b0"/><rect x="1" y="4" width="15.5" height="8" fill="#7c7a1c"/><text x="8.8" y="10.4" font-family="Liberation Sans, sans-serif" font-size="6.4" font-weight="bold" fill="#fff" text-anchor="middle" textLength="12" lengthAdjust="spacingAndGlyphs">JPG</text></svg>
<div class="t lst" style="left:263.4px;top:452px;letter-spacing:-0.25px">img_2119.jpg</div>
<div class="t lst" style="left:462.5px;width:60px;text-align:right;top:452px;letter-spacing:-0.25px">1598 KB</div>
<div class="t lst" style="left:545.5px;top:452px;letter-spacing:-0.1px">01.01.2006 17:16:28</div>
<div class="t lst" style="left:665px;top:452px">New</div>
<div class="a" style="left:238px;top:466px;width:510px;height:1px;background:repeating-linear-gradient(90deg,#e8e4d2 0,#e8e4d2 1px,transparent 1px,transparent 2px)"></div>
<svg class="a" style="left:240px;top:468px" width="17" height="16" viewBox="0 0 17 16"><path d="M5.5 0.5 H13.5 L15.5 2.5 V14.5 H5.5 Z" fill="#e4e4e0" stroke="#74746f" stroke-width="1"/><path d="M7 1.5 H13" stroke="#a8a8a4"/><path d="M6.5 13.5 H14.5" stroke="#b4b4b0"/><rect x="1" y="4" width="15.5" height="8" fill="#7c7a1c"/><text x="8.8" y="10.4" font-family="Liberation Sans, sans-serif" font-size="6.4" font-weight="bold" fill="#fff" text-anchor="middle" textLength="12" lengthAdjust="spacingAndGlyphs">JPG</text></svg>
<div class="t lst" style="left:263.4px;top:470px;letter-spacing:-0.25px">img_2118.jpg</div>
<div class="t lst" style="left:462.5px;width:60px;text-align:right;top:470px;letter-spacing:-0.25px">1595 KB</div>
<div class="t lst" style="left:545.5px;top:470px;letter-spacing:-0.1px">01.01.2006 17:16:10</div>
<div class="t lst" style="left:665px;top:470px">New</div>
<div class="a" style="left:238px;top:484px;width:510px;height:1px;background:repeating-linear-gradient(90deg,#e8e4d2 0,#e8e4d2 1px,transparent 1px,transparent 2px)"></div>
<svg class="a" style="left:240px;top:486px" width="17" height="16" viewBox="0 0 17 16"><path d="M5.5 0.5 H13.5 L15.5 2.5 V14.5 H5.5 Z" fill="#e4e4e0" stroke="#74746f" stroke-width="1"/><path d="M7 1.5 H13" stroke="#a8a8a4"/><path d="M6.5 13.5 H14.5" stroke="#b4b4b0"/><rect x="1" y="4" width="15.5" height="8" fill="#7c7a1c"/><text x="8.8" y="10.4" font-family="Liberation Sans, sans-serif" font-size="6.4" font-weight="bold" fill="#fff" text-anchor="middle" textLength="12" lengthAdjust="spacingAndGlyphs">JPG</text></svg>
<div class="t lst" style="left:263.4px;top:488px;letter-spacing:-0.25px">img_2117.jpg</div>
<div class="t lst" style="left:462.5px;width:60px;text-align:right;top:488px;letter-spacing:-0.25px">1668 KB</div>
<div class="t lst" style="left:545.5px;top:488px;letter-spacing:-0.1px">01.01.2006 17:16:00</div>
<div class="t lst" style="left:665px;top:488px">New</div>
<div class="a" style="left:238px;top:502px;width:510px;height:1px;background:repeating-linear-gradient(90deg,#e8e4d2 0,#e8e4d2 1px,transparent 1px,transparent 2px)"></div>
<svg class="a" style="left:240px;top:504px" width="17" height="16" viewBox="0 0 17 16"><path d="M5.5 0.5 H13.5 L15.5 2.5 V14.5 H5.5 Z" fill="#e4e4e0" stroke="#74746f" stroke-width="1"/><path d="M7 1.5 H13" stroke="#a8a8a4"/><path d="M6.5 13.5 H14.5" stroke="#b4b4b0"/><rect x="1" y="4" width="15.5" height="8" fill="#7c7a1c"/><text x="8.8" y="10.4" font-family="Liberation Sans, sans-serif" font-size="6.4" font-weight="bold" fill="#fff" text-anchor="middle" textLength="12" lengthAdjust="spacingAndGlyphs">JPG</text></svg>
<div class="t lst" style="left:263.4px;top:506px;letter-spacing:-0.25px">img_2116.jpg</div>
<div class="t lst" style="left:462.5px;width:60px;text-align:right;top:506px;letter-spacing:-0.25px">1725 KB</div>
<div class="t lst" style="left:545.5px;top:506px;letter-spacing:-0.1px">01.01.2006 17:15:56</div>
<div class="t lst" style="left:665px;top:506px">New</div>
<div class="a" style="left:238px;top:520px;width:510px;height:1px;background:repeating-linear-gradient(90deg,#e8e4d2 0,#e8e4d2 1px,transparent 1px,transparent 2px)"></div>
<svg class="a" style="left:240px;top:522px" width="17" height="16" viewBox="0 0 17 16"><path d="M5.5 0.5 H13.5 L15.5 2.5 V14.5 H5.5 Z" fill="#e4e4e0" stroke="#74746f" stroke-width="1"/><path d="M7 1.5 H13" stroke="#a8a8a4"/><path d="M6.5 13.5 H14.5" stroke="#b4b4b0"/><rect x="1" y="4" width="15.5" height="8" fill="#7c7a1c"/><text x="8.8" y="10.4" font-family="Liberation Sans, sans-serif" font-size="6.4" font-weight="bold" fill="#fff" text-anchor="middle" textLength="12" lengthAdjust="spacingAndGlyphs">JPG</text></svg>
<div class="t lst" style="left:263.4px;top:524px;letter-spacing:-0.25px">img_2115.jpg</div>
<div class="t lst" style="left:462.5px;width:60px;text-align:right;top:524px;letter-spacing:-0.25px">1723 KB</div>
<div class="t lst" style="left:545.5px;top:524px;letter-spacing:-0.1px">01.01.2006 17:15:56</div>
<div class="t lst" style="left:665px;top:524px">New</div>
<div class="a" style="left:238px;top:538px;width:510px;height:1px;background:repeating-linear-gradient(90deg,#e8e4d2 0,#e8e4d2 1px,transparent 1px,transparent 2px)"></div>
<svg class="a" style="left:240px;top:540px" width="17" height="16" viewBox="0 0 17 16"><path d="M5.5 0.5 H13.5 L15.5 2.5 V14.5 H5.5 Z" fill="#e4e4e0" stroke="#74746f" stroke-width="1"/><path d="M7 1.5 H13" stroke="#a8a8a4"/><path d="M6.5 13.5 H14.5" stroke="#b4b4b0"/><rect x="1" y="4" width="15.5" height="8" fill="#7c7a1c"/><text x="8.8" y="10.4" font-family="Liberation Sans, sans-serif" font-size="6.4" font-weight="bold" fill="#fff" text-anchor="middle" textLength="12" lengthAdjust="spacingAndGlyphs">JPG</text></svg>
<div class="t lst" style="left:263.4px;top:542px;letter-spacing:-0.25px">img_2114.jpg</div>
<div class="t lst" style="left:462.5px;width:60px;text-align:right;top:542px;letter-spacing:-0.25px">1689 KB</div>
<div class="t lst" style="left:545.5px;top:542px;letter-spacing:-0.1px">01.01.2006 17:15:52</div>
<div class="t lst" style="left:665px;top:542px">New</div>
<div class="a" style="left:238px;top:556px;width:510px;height:1px;background:repeating-linear-gradient(90deg,#e8e4d2 0,#e8e4d2 1px,transparent 1px,transparent 2px)"></div>
<div class="a" style="left:753px;top:233px;width:17px;height:322px;background:#f6f5f0"></div>
<div class="a sbtn sv" style="left:753px;top:233px"></div><svg class="a" style="left:757px;top:238px" width="9" height="7" viewBox="0 0 9 7"><path d="M1 5.5 L4.5 2 L8 5.5" fill="none" stroke="#4d6185" stroke-width="2"/></svg>
<div class="a sbtn sv" style="left:753px;top:250px;height:183px;background:linear-gradient(90deg,#cad9fc 0,#c6d5fb 45%,#b9c9f7 55%,#b6c6f6 100%)"></div>
<div class="a" style="left:758px;top:337px;width:7px;height:8px;background:repeating-linear-gradient(180deg,#eef4fe 0,#eef4fe 1px,#8cb0f8 1px,#8cb0f8 2px)"></div>
<div class="a sbtn sv" style="left:753px;top:538px"></div><svg class="a" style="left:757px;top:544px" width="9" height="7" viewBox="0 0 9 7"><path d="M1 1.5 L4.5 5 L8 1.5" fill="none" stroke="#4d6185" stroke-width="2"/></svg>
<div class="a" style="left:235px;top:555px;width:535px;height:1px;background:#aca899"></div><div class="a" style="left:235px;top:556px;width:535px;height:1px;background:#fff"></div><div class="a" style="left:235px;top:557px;width:2px;height:33px;background:#fff"></div><div class="a" style="left:237px;top:557px;width:532px;height:33px;background:#ece9d8"></div><div class="a" style="left:769px;top:556px;width:1px;height:35px;background:#aca899"></div><div class="a" style="left:235px;top:590px;width:535px;height:1px;background:#aca899"></div>
<div class="a" style="left:246px;top:567px;width:13px;height:13px;border:1px solid #1c5180;background:linear-gradient(135deg,#dcdcd7,#fff)"></div>
<div class="t" style="left:261px;top:567px;letter-spacing:-0.2px">Batch Rename:</div>
<div class="t" style="left:13px;top:598px;letter-spacing:-0.32px">Example file name:</div><div class="t" style="left:108px;top:598px;letter-spacing:-0.13px">C:\Pictures\Canon EOS 350D DIGITAL\2005\Autumn\[2005-10-07]\IMG_05231.JPG</div>
<div class="a" style="left:4px;top:619px;width:776px;height:18px;background:linear-gradient(180deg,#f1f0e7 0,#edebdf 12px,#e6e3d2 18px);border-top:1px solid #c2bfac"></div>
<div class="t" style="left:8px;top:622px;letter-spacing:0.15px">Total: 2111 file(s)</div>
<div class="a" style="left:100px;top:622px;width:1px;height:13px;background:#c5c2b2"></div><div class="a" style="left:101px;top:622px;width:1px;height:13px;background:#fff"></div>
<div class="t" style="left:108px;top:622px;letter-spacing:-0.3px">4,13 GB</div>
<div class="a" style="left:155px;top:622px;width:1px;height:13px;background:#c5c2b2"></div><div class="a" style="left:156px;top:622px;width:1px;height:13px;background:#fff"></div>
<div class="a" style="left:638px;top:622px;width:1px;height:13px;background:#c5c2b2"></div><div class="a" style="left:639px;top:622px;width:1px;height:13px;background:#fff"></div>
<div class="t" style="left:646px;top:622px;letter-spacing:0.1px">[2006-01-01]: 28 file(s)</div>
<div class="a" style="left:777px;top:634px;width:2px;height:2px;background:#fff"></div><div class="a" style="left:776px;top:633px;width:2px;height:2px;background:#b8b4a2"></div>
<div class="a" style="left:773px;top:634px;width:2px;height:2px;background:#fff"></div><div class="a" style="left:772px;top:633px;width:2px;height:2px;background:#b8b4a2"></div>
<div class="a" style="left:769px;top:634px;width:2px;height:2px;background:#fff"></div><div class="a" style="left:768px;top:633px;width:2px;height:2px;background:#b8b4a2"></div>
<div class="a" style="left:777px;top:630px;width:2px;height:2px;background:#fff"></div><div class="a" style="left:776px;top:629px;width:2px;height:2px;background:#b8b4a2"></div>
<div class="a" style="left:773px;top:630px;width:2px;height:2px;background:#fff"></div><div class="a" style="left:772px;top:629px;width:2px;height:2px;background:#b8b4a2"></div>
<div class="a" style="left:777px;top:626px;width:2px;height:2px;background:#fff"></div><div class="a" style="left:776px;top:625px;width:2px;height:2px;background:#b8b4a2"></div>
<div class="t" style="left:760px;top:621px;font:bold 12px 'Liberation Sans',sans-serif;line-height:15px;height:15px;color:#d3d0c4;letter-spacing:0.5px">CZ</div>
<div class="a" style="left:178px;top:204px;width:423px;height:226px;border-radius:8px 8px 0 0;background:#1259ea"></div>
<div class="a" style="left:178px;top:233px;width:1px;height:197px;background:#0a34cc"></div><div class="a" style="left:599px;top:233px;width:1px;height:197px;background:#0a2ccc"></div><div class="a" style="left:600px;top:233px;width:1px;height:197px;background:#0014b4"></div><div class="a" style="left:178px;top:428px;width:423px;height:1px;background:#0a2ccc"></div><div class="a" style="left:178px;top:429px;width:423px;height:1px;background:#0014b4"></div>
<div class="a" style="left:178px;top:204px;width:423px;height:29px;border-radius:8px 8px 0 0;background:linear-gradient(180deg,#0848d8 0,#3c93ff 1.5px,#2a80f8 3px,#0a5fe8 4.5px,#0055e5 6px,#0055e5 16px,#0860ee 19px,#0a66f4 25px,#0658e8 26.5px,#0040d0 27.5px,#002fb8 29px)"></div>
<div class="a" style="left:181px;top:233px;width:417px;height:194px;background:#ece9d8"></div>
<div class="t wtitle" style="left:185px;top:213px;letter-spacing:0.25px">Transfer Files...</div>
<div class="a cb cbx" style="left:575px;top:209px"></div><svg class="a" style="left:579px;top:213px" width="13" height="13" viewBox="0 0 13 13"><path d="M2 2 L11 11 M11 2 L2 11" stroke="#fff" stroke-width="2.2" stroke-linecap="square"/></svg>
<div class="t" style="left:317px;top:241px;letter-spacing:-0.03px">Copy: 6,30 MB/s, 11 minute(s)</div>
<div class="t" style="left:196px;top:283px;letter-spacing:-0.1px">Transferred: 57,35 MB of 4,13 GB</div>
<div class="t" style="left:196px;top:305px;letter-spacing:-0.17px">Transferring 20060214_IMG_00530.JPG</div>
<div class="a" style="left:508px;top:249px;width:73px;height:73px;background:#4d4d4d;border:1px solid #222"></div>
<svg class="a" style="left:509px;top:260px" width="71" height="51" viewBox="0 0 71 51"><defs><filter id="bl" x="-5%" y="-5%" width="110%" height="110%"><feGaussianBlur stdDeviation="0.55"/></filter><clipPath id="tc"><rect width="71" height="51"/></clipPath></defs><g clip-path="url(#tc)"><rect width="71" height="51" fill="#86aee0"/><g filter="url(#bl)"><path d="M33 51 L36 40 L41 30 L44 20 L50 14 L58 13 L64 16 L71 14 L71 51 Z" fill="#3d5f34"/><path d="M0 34 L8 31 L14 37 L22 44 L24 51 L0 51 Z" fill="#4b6b3c"/><path d="M0 0 L8 0 L5 8 L0 12 Z" fill="#9a8a8a"/><path d="M26 51 L30 40 L38 36 L40 51 Z" fill="#52603c"/><path d="M24 20 L30 14 L34 18 L30 24 Z" fill="#5a7848"/><circle cx="48.7" cy="21.3" r="1.3" fill="#35572a"/><circle cx="55.7" cy="28.8" r="2.5" fill="#35572a"/><circle cx="45.1" cy="19.0" r="1.3" fill="#587c40"/><circle cx="41.0" cy="30.9" r="1.4" fill="#3c5e2e"/><circle cx="45.4" cy="38.0" r="2.0" fill="#35572a"/><circle cx="51.1" cy="50.2" r="2.0" fill="#35572a"/><circle cx="42.4" cy="30.7" r="1.4" fill="#3c5e2e"/><circle cx="48.2" cy="44.6" r="1.3" fill="#4d7238"/><circle cx="56.8" cy="22.6" r="2.0" fill="#35572a"/><circle cx="44.8" cy="39.8" r="2.3" fill="#587c40"/><circle cx="53.4" cy="48.3" r="1.6" fill="#2f4d26"/><circle cx="64.2" cy="40.5" r="1.3" fill="#4d7238"/><circle cx="47.9" cy="33.3" r="2.2" fill="#2f4d26"/><circle cx="47.5" cy="50.3" r="1.9" fill="#35572a"/><circle cx="43.4" cy="28.0" r="1.8" fill="#587c40"/><circle cx="69.7" cy="18.7" r="2.0" fill="#3c5e2e"/><circle cx="66.9" cy="27.0" r="2.0" fill="#2f4d26"/><circle cx="57.1" cy="32.0" r="2.5" fill="#35572a"/><circle cx="53.6" cy="39.2" r="2.2" fill="#35572a"/><circle cx="48.2" cy="36.2" r="1.6" fill="#587c40"/><circle cx="50.7" cy="39.4" r="2.5" fill="#35572a"/><circle cx="49.7" cy="37.4" r="1.3" fill="#587c40"/><circle cx="63.4" cy="20.5" r="1.8" fill="#4d7238"/><circle cx="68.3" cy="33.4" r="1.8" fill="#4d7238"/><circle cx="56.1" cy="46.9" r="2.4" fill="#587c40"/><circle cx="47.2" cy="30.5" r="2.2" fill="#2f4d26"/><circle cx="50.6" cy="24.1" r="1.4" fill="#35572a"/><circle cx="45.7" cy="24.2" r="2.4" fill="#587c40"/><circle cx="44.0" cy="25.9" r="1.8" fill="#4d7238"/><circle cx="50.2" cy="35.8" r="2.2" fill="#4d7238"/><circle cx="55.0" cy="37.6" r="1.8" fill="#35572a"/><circle cx="66.7" cy="49.3" r="1.7" fill="#3c5e2e"/><circle cx="51.2" cy="19.6" r="1.3" fill="#587c40"/><circle cx="43.4" cy="27.9" r="1.3" fill="#35572a"/><circle cx="56.7" cy="34.8" r="2.1" fill="#2f4d26"/><circle cx="50.4" cy="38.2" r="2.0" fill="#2f4d26"/><circle cx="53.6" cy="20.0" r="2.6" fill="#587c40"/><circle cx="53.4" cy="32.9" r="1.4" fill="#35572a"/><circle cx="62.7" cy="41.9" r="2.4" fill="#587c40"/><circle cx="69.4" cy="34.5" r="2.2" fill="#4d7238"/><circle cx="68.2" cy="42.5" r="2.6" fill="#2f4d26"/><circle cx="66.5" cy="40.4" r="1.9" fill="#2f4d26"/><circle cx="68.0" cy="28.4" r="1.9" fill="#4d7238"/><circle cx="63.7" cy="27.5" r="2.1" fill="#4d7238"/><circle cx="64.0" cy="42.5" r="2.3" fill="#4d7238"/><circle cx="65.0" cy="41.9" r="1.5" fill="#4d7238"/><circle cx="54.3" cy="41.6" r="2.3" fill="#35572a"/><circle cx="53.6" cy="22.8" r="2.5" fill="#3c5e2e"/><circle cx="52.8" cy="48.8" r="2.5" fill="#2f4d26"/><circle cx="50.0" cy="23.7" r="1.9" fill="#4d7238"/><circle cx="49.1" cy="32.9" r="2.4" fill="#3c5e2e"/><circle cx="53.8" cy="38.9" r="2.4" fill="#35572a"/><circle cx="42.0" cy="29.6" r="1.9" fill="#4d7238"/><circle cx="43.9" cy="43.6" r="1.3" fill="#2f4d26"/><circle cx="69.2" cy="41.3" r="1.8" fill="#587c40"/><circle cx="69.2" cy="41.4" r="2.6" fill="#4d7238"/><path d="M6 51 L16 40 L27 31 L38 23 L50 13 L62 4 L71 0" stroke="#9a8880" stroke-width="2.2" fill="none"/><path d="M21 0 L23 10 L21 20 L24 30" stroke="#7d625a" stroke-width="1.8" fill="none"/><path d="M0 30 L10 24 L20 22" stroke="#94807a" stroke-width="1.2" fill="none"/><path d="M58 51 L56 40 L60 28" stroke="#6a5a4c" stroke-width="1" fill="none"/><circle cx="10.6" cy="12.8" r="2.2" fill="#eebcc0"/><circle cx="10.0" cy="17.2" r="2.0" fill="#eebcc0"/><circle cx="3.4" cy="15.6" r="1.2" fill="#f3d6d6"/><circle cx="7.7" cy="6.6" r="1.8" fill="#fbeeee"/><circle cx="9.4" cy="10.5" r="2.2" fill="#f3d6d6"/><circle cx="6.7" cy="14.6" r="1.8" fill="#ffffff"/><circle cx="6.3" cy="8.9" r="1.7" fill="#f6dedc"/><circle cx="11.3" cy="17.7" r="2.3" fill="#ffffff"/><circle cx="2.6" cy="6.5" r="1.7" fill="#f6dedc"/><circle cx="9.6" cy="9.9" r="1.4" fill="#f6dedc"/><circle cx="-1.2" cy="11.5" r="1.9" fill="#f3d6d6"/><circle cx="6.3" cy="10.0" r="1.8" fill="#f3d6d6"/><circle cx="5.3" cy="7.6" r="2.0" fill="#ffffff"/><circle cx="2.0" cy="11.2" r="2.3" fill="#fbeeee"/><circle cx="8.2" cy="12.8" r="2.1" fill="#fbeeee"/><circle cx="1.5" cy="11.8" r="1.7" fill="#fbeeee"/><circle cx="2.4" cy="8.9" r="1.0" fill="#c8323c"/><circle cx="1.3" cy="13.5" r="0.9" fill="#b83a40"/><circle cx="6.1" cy="16.9" r="1.2" fill="#e05a64"/><circle cx="8.1" cy="10.3" r="0.7" fill="#b83a40"/><circle cx="9.1" cy="15.0" r="1.0" fill="#d8404c"/><circle cx="2.2" cy="24.9" r="2.0" fill="#ffffff"/><circle cx="5.4" cy="23.0" r="1.8" fill="#e8c8c8"/><circle cx="2.5" cy="25.7" r="2.2" fill="#f3d6d6"/><circle cx="5.4" cy="31.1" r="2.1" fill="#eebcc0"/><circle cx="6.3" cy="27.7" r="1.3" fill="#f3d6d6"/><circle cx="0.8" cy="25.5" r="1.6" fill="#ffffff"/><circle cx="3.2" cy="25.0" r="1.1" fill="#ffffff"/><circle cx="1.0" cy="22.9" r="1.5" fill="#fbeeee"/><circle cx="1.6" cy="23.7" r="1.2" fill="#fbeeee"/><circle cx="5.8" cy="23.0" r="1.2" fill="#fbeeee"/><circle cx="3.1" cy="30.3" r="1.4" fill="#f3d6d6"/><circle cx="6.1" cy="26.2" r="2.0" fill="#e8c8c8"/><circle cx="3.9" cy="25.7" r="1.7" fill="#f6dedc"/><circle cx="3.6" cy="22.8" r="2.0" fill="#fbeeee"/><circle cx="6.9" cy="30.5" r="1.2" fill="#e05a64"/><circle cx="0.0" cy="19.5" r="1.0" fill="#d8404c"/><circle cx="4.5" cy="26.6" r="0.9" fill="#d8404c"/><circle cx="1.8" cy="27.6" r="1.0" fill="#e05a64"/><circle cx="24.6" cy="18.0" r="2.4" fill="#fbeeee"/><circle cx="20.9" cy="18.5" r="2.0" fill="#ffffff"/><circle cx="19.4" cy="16.7" r="1.8" fill="#eebcc0"/><circle cx="22.0" cy="19.0" r="2.4" fill="#fbeeee"/><circle cx="21.4" cy="17.1" r="1.9" fill="#f6dedc"/><circle cx="22.0" cy="19.5" r="1.3" fill="#eebcc0"/><circle cx="22.1" cy="14.7" r="1.9" fill="#eebcc0"/><circle cx="25.8" cy="13.0" r="2.0" fill="#ffffff"/><circle cx="23.1" cy="16.8" r="2.1" fill="#e8c8c8"/><circle cx="25.5" cy="22.5" r="2.2" fill="#fbeeee"/><circle cx="24.3" cy="17.3" r="1.7" fill="#ffffff"/><circle cx="24.3" cy="18.2" r="2.2" fill="#eebcc0"/><circle cx="20.0" cy="15.1" r="1.0" fill="#c8323c"/><circle cx="22.6" cy="17.5" r="0.9" fill="#e05a64"/><circle cx="20.4" cy="23.8" r="0.7" fill="#e05a64"/><circle cx="23.2" cy="16.5" r="0.7" fill="#e05a64"/><circle cx="34.4" cy="33.1" r="2.3" fill="#ffffff"/><circle cx="36.1" cy="35.3" r="1.6" fill="#fbeeee"/><circle cx="35.7" cy="30.5" r="1.6" fill="#f6dedc"/><circle cx="37.5" cy="32.4" r="1.6" fill="#f3d6d6"/><circle cx="40.6" cy="30.5" r="2.5" fill="#f3d6d6"/><circle cx="33.7" cy="26.1" r="2.6" fill="#eebcc0"/><circle cx="34.4" cy="28.6" r="2.6" fill="#ffffff"/><circle cx="34.5" cy="31.3" r="2.8" fill="#e8c8c8"/><circle cx="31.7" cy="28.6" r="1.7" fill="#f6dedc"/><circle cx="31.6" cy="31.5" r="2.7" fill="#fbeeee"/><circle cx="29.6" cy="28.9" r="2.9" fill="#e8c8c8"/><circle cx="34.2" cy="31.0" r="1.7" fill="#fbeeee"/><circle cx="34.1" cy="33.1" r="2.3" fill="#eebcc0"/><circle cx="32.1" cy="29.0" r="1.9" fill="#e8c8c8"/><circle cx="34.7" cy="35.7" r="1.0" fill="#d8404c"/><circle cx="30.9" cy="31.9" r="1.0" fill="#d8404c"/><circle cx="29.0" cy="33.0" r="0.7" fill="#e05a64"/><circle cx="35.1" cy="29.6" r="0.9" fill="#b83a40"/><circle cx="41.5" cy="10.2" r="1.7" fill="#e8c8c8"/><circle cx="50.6" cy="8.7" r="1.4" fill="#f3d6d6"/><circle cx="46.9" cy="9.5" r="2.2" fill="#e8c8c8"/><circle cx="43.4" cy="5.5" r="1.4" fill="#eebcc0"/><circle cx="44.3" cy="13.1" r="1.6" fill="#e8c8c8"/><circle cx="38.5" cy="7.4" r="1.9" fill="#ffffff"/><circle cx="43.0" cy="7.4" r="1.6" fill="#f6dedc"/><circle cx="54.6" cy="5.7" r="1.7" fill="#fbeeee"/><circle cx="49.3" cy="9.3" r="2.6" fill="#eebcc0"/><circle cx="38.0" cy="13.0" r="1.4" fill="#f3d6d6"/><circle cx="50.8" cy="10.7" r="2.5" fill="#ffffff"/><circle cx="50.1" cy="12.6" r="1.7" fill="#f6dedc"/><circle cx="48.0" cy="9.6" r="2.5" fill="#eebcc0"/><circle cx="44.1" cy="7.1" r="2.5" fill="#fbeeee"/><circle cx="43.3" cy="3.2" r="1.5" fill="#e8c8c8"/><circle cx="43.0" cy="10.0" r="1.3" fill="#ffffff"/><circle cx="45.0" cy="-0.9" r="2.5" fill="#fbeeee"/><circle cx="45.2" cy="7.6" r="1.7" fill="#e8c8c8"/><circle cx="41.8" cy="10.4" r="0.8" fill="#d8404c"/><circle cx="41.6" cy="8.6" r="0.8" fill="#d8404c"/><circle cx="51.5" cy="9.2" r="0.7" fill="#c8323c"/><circle cx="44.4" cy="12.6" r="1.1" fill="#c8323c"/><circle cx="46.1" cy="2.2" r="1.1" fill="#d8404c"/><circle cx="38.0" cy="-0.6" r="1.0" fill="#c8323c"/><circle cx="64.5" cy="4.5" r="1.9" fill="#eebcc0"/><circle cx="63.8" cy="7.5" r="1.3" fill="#eebcc0"/><circle cx="61.4" cy="2.3" r="1.7" fill="#eebcc0"/><circle cx="59.6" cy="5.2" r="2.4" fill="#e8c8c8"/><circle cx="59.7" cy="7.3" r="1.8" fill="#ffffff"/><circle cx="59.3" cy="1.7" r="1.4" fill="#e8c8c8"/><circle cx="61.7" cy="9.2" r="1.9" fill="#eebcc0"/><circle cx="57.5" cy="3.8" r="1.7" fill="#eebcc0"/><circle cx="57.6" cy="2.3" r="0.8" fill="#c8323c"/><circle cx="62.1" cy="4.3" r="1.1" fill="#e05a64"/><circle cx="20.2" cy="42.8" r="1.5" fill="#eebcc0"/><circle cx="19.9" cy="39.2" r="1.5" fill="#ffffff"/><circle cx="23.1" cy="43.3" r="1.2" fill="#ffffff"/><circle cx="14.2" cy="41.9" r="1.2" fill="#f3d6d6"/><circle cx="23.2" cy="39.5" r="1.6" fill="#e8c8c8"/><circle cx="27.7" cy="39.7" r="1.2" fill="#fbeeee"/><circle cx="13.8" cy="45.2" r="2.2" fill="#eebcc0"/><circle cx="18.4" cy="42.1" r="2.0" fill="#f6dedc"/><circle cx="23.1" cy="41.5" r="1.3" fill="#fbeeee"/><circle cx="26.4" cy="51.0" r="2.1" fill="#fbeeee"/><circle cx="18.9" cy="36.1" r="1.2" fill="#eebcc0"/><circle cx="20.0" cy="41.8" r="1.4" fill="#f3d6d6"/><circle cx="25.2" cy="39.1" r="2.2" fill="#ffffff"/><circle cx="16.5" cy="38.4" r="1.9" fill="#eebcc0"/><circle cx="21.2" cy="43.0" r="2.1" fill="#f6dedc"/><circle cx="21.1" cy="45.0" r="1.1" fill="#f6dedc"/><circle cx="6.6" cy="38.8" r="2.2" fill="#ffffff"/><circle cx="14.7" cy="35.3" r="1.7" fill="#eebcc0"/><circle cx="18.9" cy="41.7" r="1.0" fill="#b83a40"/><circle cx="19.7" cy="42.9" r="1.1" fill="#b83a40"/><circle cx="18.8" cy="40.5" r="1.0" fill="#c8323c"/><circle cx="23.0" cy="40.5" r="1.0" fill="#d8404c"/><circle cx="19.1" cy="37.7" r="0.7" fill="#b83a40"/><circle cx="22.2" cy="34.7" r="0.7" fill="#d8404c"/><circle cx="32.5" cy="45.5" r="1.2" fill="#f3d6d6"/><circle cx="30.9" cy="50.9" r="1.1" fill="#ffffff"/><circle cx="27.1" cy="43.2" r="1.5" fill="#f3d6d6"/><circle cx="30.8" cy="45.5" r="1.1" fill="#f6dedc"/><circle cx="28.4" cy="47.3" r="1.1" fill="#f6dedc"/><circle cx="31.0" cy="46.3" r="1.4" fill="#eebcc0"/><circle cx="29.4" cy="43.5" r="2.0" fill="#fbeeee"/><circle cx="32.4" cy="44.9" r="1.7" fill="#f3d6d6"/><circle cx="26.7" cy="45.5" r="1.7" fill="#ffffff"/><circle cx="27.9" cy="48.0" r="1.4" fill="#ffffff"/><circle cx="31.0" cy="46.9" r="0.8" fill="#d8404c"/><circle cx="31.6" cy="45.5" r="0.8" fill="#c8323c"/><circle cx="30.3" cy="43.2" r="0.7" fill="#b83a40"/><circle cx="10.6" cy="1.5" r="1.7" fill="#f6dedc"/><circle cx="11.8" cy="5.1" r="0.9" fill="#eebcc0"/><circle cx="7.4" cy="5.3" r="0.9" fill="#eebcc0"/><circle cx="11.8" cy="3.2" r="1.1" fill="#fbeeee"/><circle cx="10.9" cy="-2.0" r="1.2" fill="#ffffff"/><circle cx="8.0" cy="8.0" r="1.1" fill="#fbeeee"/><circle cx="10.5" cy="0.7" r="0.8" fill="#e05a64"/><circle cx="10.4" cy="-0.5" r="0.6" fill="#d8404c"/><circle cx="13.3" cy="36.3" r="2.0" fill="#eebcc0"/><circle cx="11.3" cy="34.5" r="1.8" fill="#eebcc0"/><circle cx="15.3" cy="35.6" r="1.8" fill="#fbeeee"/><circle cx="12.6" cy="27.5" r="1.6" fill="#f3d6d6"/><circle cx="11.8" cy="35.3" r="1.8" fill="#ffffff"/><circle cx="10.1" cy="31.0" r="1.8" fill="#eebcc0"/><circle cx="13.0" cy="34.1" r="1.5" fill="#fbeeee"/><circle cx="11.3" cy="32.5" r="1.9" fill="#eebcc0"/><circle cx="15.3" cy="32.8" r="1.2" fill="#fbeeee"/><circle cx="5.3" cy="37.2" r="1.2" fill="#eebcc0"/><circle cx="15.2" cy="35.4" r="1.2" fill="#e8c8c8"/><circle cx="8.1" cy="31.8" r="1.8" fill="#fbeeee"/><circle cx="12.3" cy="35.6" r="0.8" fill="#e05a64"/><circle cx="12.8" cy="30.8" r="0.7" fill="#c8323c"/><circle cx="13.2" cy="35.7" r="0.8" fill="#c8323c"/><circle cx="4.7" cy="39.3" r="1.0" fill="#c8323c"/><circle cx="53.6" cy="21.2" r="0.9" fill="#fbeeee"/><circle cx="48.8" cy="20.5" r="1.5" fill="#eebcc0"/><circle cx="53.4" cy="20.4" r="0.8" fill="#fbeeee"/><circle cx="49.3" cy="18.0" r="1.5" fill="#f3d6d6"/><circle cx="49.5" cy="22.5" r="1.3" fill="#eebcc0"/><circle cx="52.5" cy="17.1" r="0.7" fill="#d8404c"/><circle cx="49.7" cy="18.4" r="0.6" fill="#c8323c"/><circle cx="63.8" cy="26.3" r="0.7" fill="#ffffff"/><circle cx="63.7" cy="23.4" r="1.3" fill="#fbeeee"/><circle cx="63.0" cy="26.6" r="0.9" fill="#f6dedc"/><circle cx="64.7" cy="28.3" r="0.6" fill="#b83a40"/><circle cx="65.1" cy="26.8" r="1.0" fill="#c8323c"/><circle cx="66.6" cy="40.4" r="0.8" fill="#e8c8c8"/><circle cx="67.7" cy="39.9" r="1.3" fill="#eebcc0"/><circle cx="65.4" cy="41.4" r="0.9" fill="#ffffff"/><circle cx="68.3" cy="40.3" r="1.0" fill="#e05a64"/><circle cx="64.9" cy="40.9" r="0.9" fill="#d8404c"/><circle cx="54.3" cy="44.5" r="1.0" fill="#fbeeee"/><circle cx="55.0" cy="43.1" r="0.8" fill="#f3d6d6"/><circle cx="54.6" cy="44.2" r="0.8" fill="#eebcc0"/><circle cx="53.1" cy="43.1" r="0.7" fill="#c8323c"/><circle cx="53.7" cy="45.6" r="0.7" fill="#d8404c"/><circle cx="26.8" cy="6.2" r="1.0" fill="#f3d6d6"/><circle cx="30.3" cy="5.6" r="1.1" fill="#eebcc0"/><circle cx="28.0" cy="4.4" r="1.5" fill="#fbeeee"/><circle cx="27.6" cy="3.7" r="1.3" fill="#f3d6d6"/><circle cx="31.5" cy="4.1" r="1.5" fill="#f6dedc"/><circle cx="30.6" cy="4.9" r="0.6" fill="#c8323c"/><circle cx="31.1" cy="5.6" r="0.7" fill="#e05a64"/><circle cx="8.1" cy="48.7" r="0.9" fill="#f3d6d6"/><circle cx="3.4" cy="42.1" r="1.5" fill="#fbeeee"/><circle cx="6.7" cy="46.6" r="1.4" fill="#eebcc0"/><circle cx="6.2" cy="42.2" r="1.2" fill="#eebcc0"/><circle cx="8.0" cy="46.9" r="1.3" fill="#ffffff"/><circle cx="7.4" cy="44.2" r="1.8" fill="#f6dedc"/><circle cx="4.9" cy="44.7" r="1.6" fill="#f6dedc"/><circle cx="6.2" cy="44.5" r="1.3" fill="#eebcc0"/><circle cx="10.5" cy="45.1" r="1.0" fill="#ffffff"/><circle cx="4.7" cy="45.3" r="0.9" fill="#fbeeee"/><circle cx="13.1" cy="49.5" r="1.1" fill="#e05a64"/><circle cx="6.9" cy="43.9" r="1.0" fill="#b83a40"/><circle cx="8.2" cy="43.3" r="1.2" fill="#d8404c"/><circle cx="26.5" cy="22.7" r="1.0" fill="#f3d6d6"/><circle cx="28.5" cy="25.7" r="1.5" fill="#f3d6d6"/><circle cx="26.7" cy="25.4" r="1.4" fill="#ffffff"/><circle cx="27.0" cy="29.1" r="1.1" fill="#f6dedc"/><circle cx="27.5" cy="25.8" r="1.8" fill="#f6dedc"/><circle cx="23.9" cy="27.4" r="1.4" fill="#f6dedc"/><circle cx="26.7" cy="27.6" r="1.3" fill="#f3d6d6"/><circle cx="25.8" cy="25.6" r="1.7" fill="#ffffff"/><circle cx="29.3" cy="31.1" r="1.1" fill="#d8404c"/><circle cx="32.0" cy="28.6" r="0.9" fill="#b83a40"/><circle cx="35.7" cy="15.7" r="1.1" fill="#fbeeee"/><circle cx="35.5" cy="17.0" r="1.6" fill="#e8c8c8"/><circle cx="39.3" cy="25.1" r="1.0" fill="#f6dedc"/><circle cx="39.5" cy="18.8" r="1.1" fill="#f3d6d6"/><circle cx="40.0" cy="17.3" r="1.1" fill="#f6dedc"/><circle cx="35.7" cy="12.8" r="1.7" fill="#f6dedc"/><circle cx="43.0" cy="15.7" r="0.9" fill="#e8c8c8"/><circle cx="42.2" cy="21.0" r="0.9" fill="#b83a40"/><circle cx="39.5" cy="18.6" r="0.7" fill="#b83a40"/><circle cx="43.8" cy="41.7" r="1.2" fill="#fbeeee"/><circle cx="43.3" cy="44.0" r="0.9" fill="#f6dedc"/><circle cx="42.0" cy="40.8" r="1.0" fill="#f3d6d6"/><circle cx="44.5" cy="41.1" r="1.5" fill="#fbeeee"/><circle cx="44.0" cy="43.0" r="0.8" fill="#fbeeee"/><circle cx="45.8" cy="44.3" r="0.8" fill="#e05a64"/><circle cx="44.0" cy="42.3" r="1.0" fill="#e05a64"/></g></g></svg>
<div class="a pb" style="left:196px;top:329px;width:387px;height:17px"></div>
<div class="blk" style="left:200px;top:332px"></div>
<div class="blk" style="left:208px;top:332px"></div>
<div class="blk" style="left:216px;top:332px"></div>
<div class="blk" style="left:224px;top:332px"></div>
<div class="blk" style="left:232px;top:332px"></div>
<div class="blk" style="left:240px;top:332px"></div>
<div class="blk" style="left:248px;top:332px"></div>
<div class="blk" style="left:256px;top:332px"></div>
<div class="blk" style="left:264px;top:332px"></div>
<div class="blk" style="left:272px;top:332px"></div>
<div class="blk" style="left:280px;top:332px"></div>
<div class="blk" style="left:288px;top:332px"></div>
<div class="blk" style="left:296px;top:332px"></div>
<div class="blk" style="left:304px;top:332px"></div>
<div class="blk" style="left:312px;top:332px"></div>
<div class="blk" style="left:320px;top:332px"></div>
<div class="blk" style="left:328px;top:332px"></div>
<div class="t" style="left:197px;top:352px">Total Progress: 26 of 2111</div>
<div class="t" style="left:540px;width:40px;text-align:right;top:352px">1 %</div>
<div class="a pb" style="left:196px;top:369px;width:387px;height:17px"></div>
<div class="blk" style="left:200px;top:372px"></div>
<div class="a btn" style="left:350px;top:397px;width:73px;height:20px"></div><div class="t" style="left:349px;width:73px;text-align:center;top:399px;letter-spacing:-0.3px">Cancel</div>
<div class="a" style="left:509px;top:399px;width:13px;height:13px;border:1px solid #1c5180;background:linear-gradient(135deg,#dcdcd7,#fff)"></div>
<svg class="a" style="left:511px;top:401px" width="9" height="9" viewBox="0 0 9 9"><path d="M1 4 L3.5 6.5 L8 1.5" stroke="#21a121" stroke-width="2" fill="none"/></svg>
<div class="t" style="left:525px;top:399px;letter-spacing:-0.3px">Preview</div>
</body></html>
